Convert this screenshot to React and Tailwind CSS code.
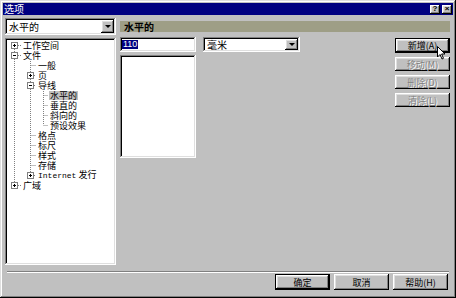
import React from "react";

// Win95-style bevels, shared by the window, fields and buttons.
const RAISED =
  "shadow-[inset_-1px_-1px_#000,inset_1px_1px_#fff,inset_-2px_-2px_#808080,inset_2px_2px_#dfdfdf]";
const SUNKEN =
  "shadow-[inset_-1px_-1px_#fff,inset_1px_1px_#808080,inset_-2px_-2px_#dfdfdf,inset_2px_2px_#000]";
const FONT = "font-['Noto_Sans_CJK_SC','Noto_Sans',sans-serif]";

// Tree rows: level decides the indent, box is the expander (+ / - / none).
const TREE = [
  { label: "工作空间", level: 0, box: "+" },
  { label: "文件", level: 0, box: "-" },
  { label: "一般", level: 1 },
  { label: "页", level: 1, box: "+" },
  { label: "导线", level: 1, box: "-" },
  { label: "水平的", level: 2, selected: true },
  { label: "垂直的", level: 2 },
  { label: "斜向的", level: 2 },
  { label: "预设效果", level: 2 },
  { label: "格点", level: 1 },
  { label: "标尺", level: 1 },
  { label: "样式", level: 1 },
  { label: "存储", level: 1 },
  { label: "Internet 发行", level: 1, box: "+" },
  { label: "广域", level: 0, box: "+" },
];

const INDENT = { 0: "pl-[17px]", 1: "pl-[32px]", 2: "pl-[44px]" };

const rowY = (i) => 7 + i * 10;

function TreeLines() {
  const boxX = { 0: 9.5, 1: 25.5 };
  return (
    <svg className="absolute left-0 top-0" width="111" height="227">
      <g stroke="#808080" strokeDasharray="1 1" fill="none">
        <line x1="9.5" y1={rowY(0)} x2="9.5" y2={rowY(14)} />
        <line x1="25.5" y1={rowY(1) + 4} x2="25.5" y2={rowY(13)} />
        <line x1="38.5" y1={rowY(4) + 4} x2="38.5" y2={rowY(8)} />
        {TREE.map((r, i) => {
          const y = rowY(i) + 0.5;
          if (r.level === 0) return <line key={i} x1="13" y1={y} x2="16" y2={y} />;
          if (r.level === 1) return <line key={i} x1={r.box ? 29 : 25.5} y1={y} x2="31" y2={y} />;
          return <line key={i} x1="38.5" y1={y} x2="43" y2={y} />;
        })}
      </g>
      {TREE.map((r, i) => {
        if (!r.box) return null;
        const cx = boxX[r.level];
        const cy = rowY(i) + 0.5;
        return (
          <g key={"b" + i}>
            <rect x={cx - 3} y={cy - 3} width="6" height="6" fill="#fff" stroke="#808080" />
            <line x1={cx - 1.5} y1={cy} x2={cx + 1.5} y2={cy} stroke="#000" />
            {r.box === "+" && <line x1={cx} y1={cy - 1.5} x2={cx} y2={cy + 1.5} stroke="#000" />}
          </g>
        );
      })}
    </svg>
  );
}

function Arrow() {
  return <span className="w-0 h-0 border-x-[3px] border-t-[3px] border-x-transparent border-t-black" />;
}

function Combo({ text, className }) {
  return (
    <div className={`bg-white ${SUNKEN} flex items-stretch p-[2px] ${className}`}>
      <span className="flex-1 pl-[2px] text-[10px] leading-none flex items-center text-black">{text}</span>
      <span className={`w-[13px] bg-[#c0c0c0] ${RAISED} flex items-center justify-center`}>
        <Arrow />
      </span>
    </div>
  );
}

function Button({ children, disabled, primary, className = "" }) {
  return (
    <div
      className={`bg-[#c0c0c0] flex items-center justify-center text-[9px] leading-none ${
        primary ? "border border-black" : ""
      } ${className}`}
    >
      <div
        className={`w-full h-full flex items-center justify-center ${RAISED} ${
          disabled ? "text-[#808080] [text-shadow:1px_1px_0_#fff]" : "text-black"
        }`}
      >
        {children}
      </div>
    </div>
  );
}

export default function App() {
  return (
    <div
      className={`w-[456px] h-[298px] bg-[#c0c0c0] p-[3px] flex flex-col relative ${FONT} shadow-[inset_-1px_-1px_#000,inset_1px_1px_#dfdfdf,inset_-2px_-2px_#808080,inset_2px_2px_#fff]`}
    >
      {/* Title bar */}
      <div className="h-[12px] bg-[#000080] flex items-center justify-between pl-[1px] pr-[1px]">
        <span className="text-white text-[10px] leading-none">选项</span>
        <div className="flex gap-[2px]">
          <span className={`w-[10px] h-[9px] bg-[#c0c0c0] ${RAISED} flex items-center justify-center text-[8px] font-bold leading-none font-['Liberation_Sans',sans-serif]`}>
            ?
          </span>
          <span className={`w-[10px] h-[9px] bg-[#c0c0c0] ${RAISED} flex items-center justify-center text-[8px] font-bold leading-none font-['Liberation_Sans',sans-serif]`}>
            ×
          </span>
        </div>
      </div>

      <div className="flex-1 flex flex-col px-[2px]">
        <div className="flex h-[253px]">
          {/* Left: page selector + tree */}
          <div className="w-[111px] pt-[3px] flex flex-col gap-[3px]">
            <Combo text="水平的" className="h-[17px]" />
            <div className={`h-[227px] bg-white ${SUNKEN} relative pt-[2px]`}>
              <TreeLines />
              {TREE.map((r) => (
                <div key={r.label} className={`h-[10px] flex items-center ${INDENT[r.level]}`}>
                  <span
                    className={`text-[9px] leading-[9px] px-[1px] whitespace-nowrap ${
                      r.selected ? "bg-[#c0c0c0]" : ""
                    } text-black`}
                  >
                    {r.label.startsWith("Internet") ? (
                      <>
                        <span className="font-['Liberation_Mono',monospace] text-[8px]">Internet</span> 发行
                      </>
                    ) : (
                      r.label
                    )}
                  </span>
                </div>
              ))}
            </div>
          </div>

          {/* Right: page contents */}
          <div className="flex-1 ml-[4px] pt-[6px] pr-[1px] flex flex-col">
            <div className="h-[11px] bg-[#9e9e86] flex items-center pl-[4px]">
              <span className="text-[10px] font-bold leading-none text-black">水平的</span>
            </div>
            <div className="flex mt-[5px]">
              <div className="w-[76px] flex flex-col gap-[3px]">
                <div className={`h-[15px] bg-white ${SUNKEN} flex items-center pl-[2px]`}>
                  <span className="bg-[#000080] text-white text-[9px] leading-[9px] px-[1px] font-['Liberation_Sans',sans-serif]">
                    110
                  </span>
                </div>
                <div className={`h-[103px] bg-white ${SUNKEN}`} />
              </div>
              <Combo text="毫米" className="w-[97px] h-[15px] ml-[7px]" />
              <div className="ml-auto w-[55px] flex flex-col gap-[4px] pt-[1px]">
                <Button primary className="h-[15px]">
                  新增(A)
                </Button>
                <Button disabled className="h-[14px]">
                  移动(M)
                </Button>
                <Button disabled className="h-[14px]">
                  删除(D)
                </Button>
                <Button disabled className="h-[14px]">
                  清除(L)
                </Button>
              </div>
            </div>
          </div>
        </div>

        <div className="mt-[3px] mx-[2px] h-[2px] border-t border-t-[#808080] border-b border-b-white" />

        <div className="mt-[1px] flex justify-end gap-[4px] pr-[3px]">
          <Button primary className="w-[55px] h-[16px]">
            确定
          </Button>
          <Button className="w-[55px] h-[16px]">取消</Button>
          <Button className="w-[55px] h-[16px]">帮助(H)</Button>
        </div>
      </div>

      {/* Mouse pointer over the 新增 button */}
      <svg className="absolute left-[437px] top-[46px]" width="9" height="14" viewBox="0 0 9 14">
        <path d="M0.5 0.5 L0.5 11 L3 8.5 L5 13 L6.5 12.3 L4.6 8 L8 8 Z" fill="#fff" stroke="#000" strokeWidth="1" />
      </svg>
    </div>
  );
}
